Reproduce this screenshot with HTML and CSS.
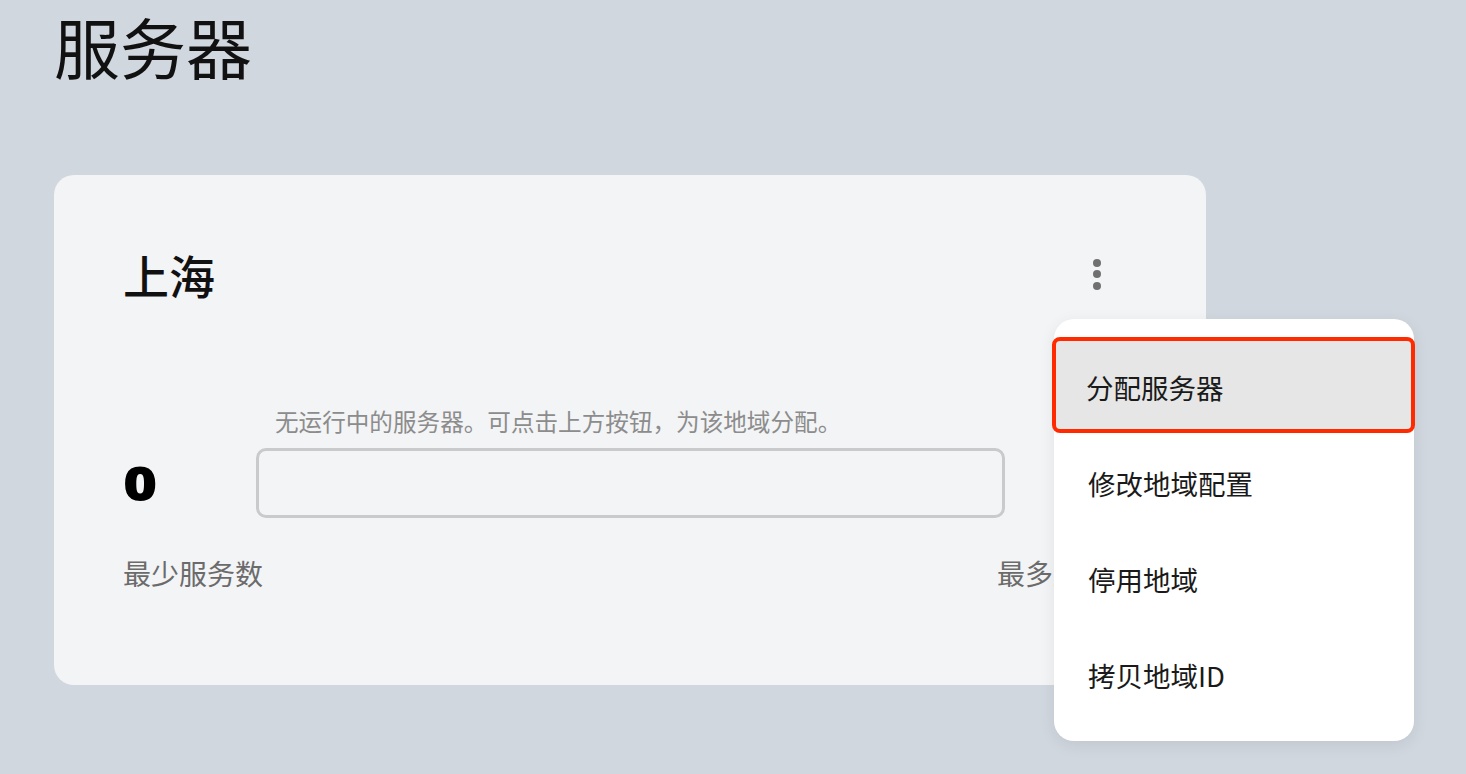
FILE: index.html
```html
<!DOCTYPE html>
<html lang="zh-CN">
<head>
    <meta charset="utf-8">
    <title>服务器</title>
    <link rel="stylesheet" href="styles.css">
</head>
<body>
    <div class="page">
        <h1 class="page-title">服务器</h1>

        <div class="region-card">
            <div class="region-head">
                <h2 class="region-name">上海</h2>
                <button class="more-btn" aria-label="更多">
                    <svg width="24" height="32" viewBox="0 0 24 32">
                        <circle cx="12" cy="5" r="4" fill="#707070"/>
                        <circle cx="12" cy="16" r="4" fill="#707070"/>
                        <circle cx="12" cy="28" r="4" fill="#707070"/>
                    </svg>
                </button>
            </div>

            <div class="region-body">
                <div class="hint">无运行中的服务器。可点击上方按钮，为该地域分配。</div>
                <div class="count"><span>0</span></div>
                <div class="server-bar"></div>
                <div class="count count-max"><span>0</span></div>
            </div>

            <div class="region-foot">
                <span>最少服务数</span>
                <span>最多服务数</span>
            </div>
        </div>

        <ul class="menu">
            <li class="menu-item active">分配服务器</li>
            <li class="menu-item">修改地域配置</li>
            <li class="menu-item">停用地域</li>
            <li class="menu-item">拷贝地域ID</li>
        </ul>
    </div>
</body>
</html>
```

FILE: styles.css
```css
body {
    margin: 0;
    background: #d1d7df;
    font-family: "Noto Sans CJK SC", "Noto Sans", sans-serif;
    color: #111;
    min-height: 100vh;
}
.page {
    position: relative;
    padding: 0 0 0 54px;
}
.page-title {
    margin: 0;
    font-size: 66px;
    font-weight: 400;
    line-height: 90px;
}
.region-card {
    width: 1152px;
    height: 510px;
    box-sizing: border-box;
    margin-top: 85px;
    padding: 76px 69px 0;
    background: #f3f4f6;
    border-radius: 20px;
}
.region-head {
    display: flex;
    justify-content: space-between;
    align-items: center;
    height: 46px;
}
.region-name {
    margin: 0;
    font-size: 46px;
    font-weight: 500;
    line-height: 46px;
}
.more-btn {
    border: none;
    background: none;
    padding: 0;
    margin-right: 28px;
    width: 24px;
    height: 32px;
    cursor: pointer;
}
.region-body {
    display: grid;
    grid-template-columns: 133px 1fr 132px;
    align-items: center;
    margin-top: 110px;
}
.hint {
    grid-column: 2;
    padding-left: 19px;
    font-size: 23.6px;
    line-height: 28px;
    color: #8c8c8c;
    margin-bottom: 13px;
}
.count {
    grid-column: 1;
    font-family: "Noto Sans", sans-serif;
    font-size: 48px;
    font-weight: 900;
    color: #000;
    line-height: 50px;
}
.count span {
    display: inline-block;
    transform: scaleX(1.22);
    transform-origin: left center;
}
.count-max {
    grid-column: 3;
    text-align: right;
}
.server-bar {
    grid-column: 2;
    height: 70px;
    box-sizing: border-box;
    border: 3px solid #c9cacc;
    border-radius: 10px;
}
.region-foot {
    display: flex;
    justify-content: space-between;
    margin-top: 38px;
    font-size: 28px;
    line-height: 34px;
    color: #6b6b6b;
}
.menu {
    position: absolute;
    left: 1054px;
    top: 319px;
    width: 360px;
    margin: 0;
    padding: 18px 0 20px;
    list-style: none;
    background: #fff;
    border-radius: 20px;
    box-shadow: 0 4px 16px rgba(0, 0, 0, 0.08);
}
.menu-item {
    height: 96px;
    box-sizing: border-box;
    display: flex;
    align-items: center;
    padding: 4px 0 0 30px;
    border: 4px solid transparent;
    border-radius: 8px;
    font-size: 27.5px;
    color: #1a1a1a;
    cursor: pointer;
}
.menu-item.active {
    background: #e6e6e6;
    border-color: #ff2a00;
    margin: 0 -1px 0 -2px;
}
```
